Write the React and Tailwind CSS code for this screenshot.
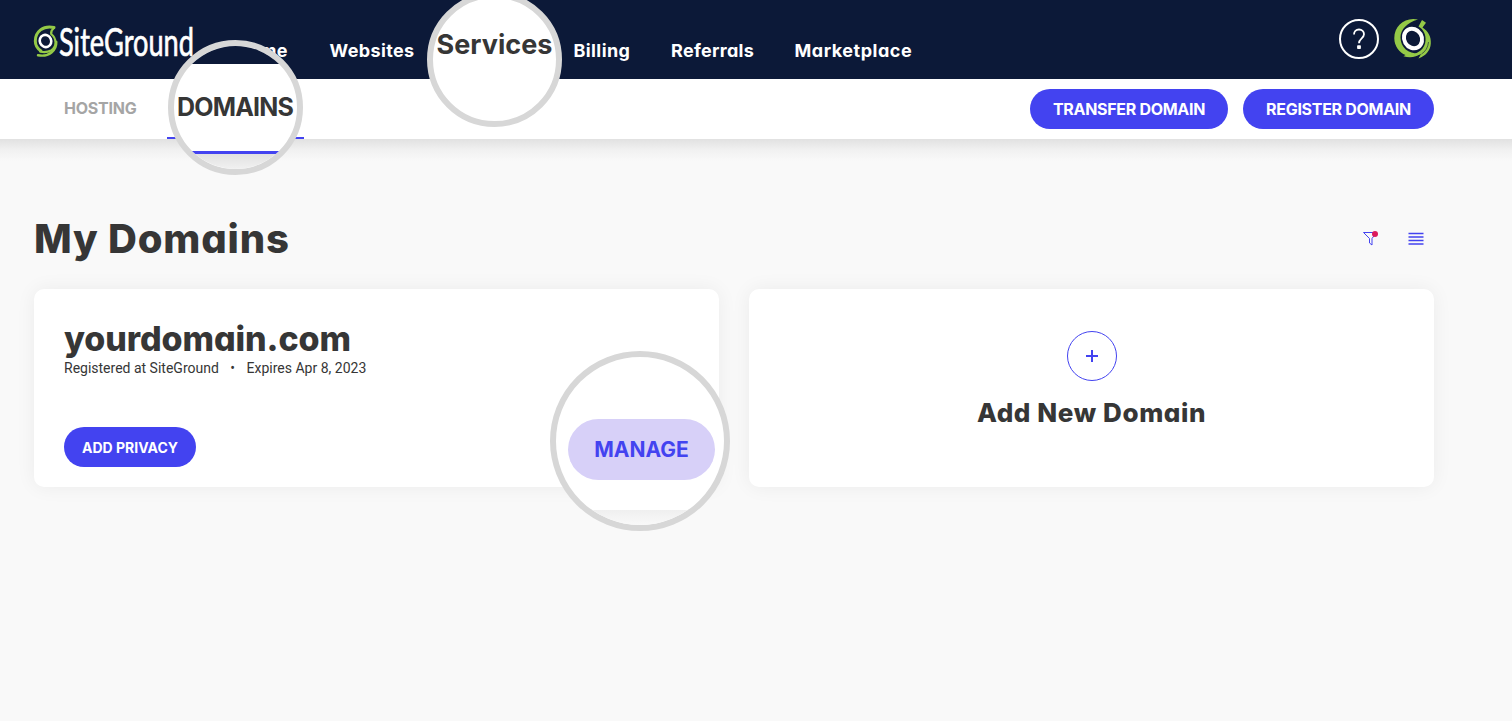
const NAV_ITEMS = [
  { label: 'Home', className: 'w-[54px] tracking-[0.3px]' },
  { label: 'Websites', className: 'w-[86px] tracking-[0.38px]' },
  // sits entirely behind the magnifier
  { label: 'Services', className: 'w-[77px] invisible' },
  { label: 'Billing', className: 'w-[57px] tracking-[0.4px]' },
  { label: 'Referrals', className: 'w-[83px] tracking-[0.3px]' },
  { label: 'Marketplace', className: 'w-[118px] tracking-[0.52px]' },
];

function Logo() {
  return (
    <svg className="block shrink-0" width="164" height="40" viewBox="0 0 164 40" role="img" aria-label="SiteGround">
      <g fill="none" strokeLinecap="round">
        <path d="M21 4.500C10 2 2.300 9 2.300 18c0 5 2.700 8 5.700 10" stroke="#94c947" strokeWidth="3" />
        <path d="M21 5c-2.500 2-3.300 3.500-2.800 6C24 15.500 24 24 18 27.500c-3.500 1.800-7 2-11 1" stroke="#94c947" strokeWidth="2.200" />
        <path d="M23.300 19c.3 8-7 15.500-18.300 13.200" stroke="#94c947" strokeWidth="2.400" />
        <ellipse cx="12.500" cy="18" rx="5.700" ry="6.200" transform="rotate(-24 12.500 18)" fill="#0c1938" stroke="#fff" strokeWidth="2.600" />
      </g>
      <text
        x="26"
        y="32.800"
        fontSize="38"
        fill="#fff"
        stroke="#fff"
        strokeWidth=".7"
        textLength="135"
        lengthAdjust="spacingAndGlyphs"
        className="font-[Lato,sans-serif]"
      >
        SiteGround
      </text>
    </svg>
  );
}

function Avatar() {
  return (
    <svg className="block" width="40" height="42" viewBox="0 0 40 42" aria-hidden="true">
      <path d="M24 1.500C11-1.500 0 8 .3 20.500c.2 8 5 14 11.200 16.500l-2 1.300c7 2.200 13 .7 17-2.800C16 36.500 6.500 30.500 6.500 19.500 6.500 11.500 13 4.500 24 1.500Z" fill="#94c947" />
      <path d="M28 2l4 2.800-3.500 4.700c5.500 3.500 8.800 9 8.300 16-.4 6.500-4.300 12-12.300 15l2.500-4.500c-4 2-10 2.800-14 1.800C25 36 31 30.500 31.500 22.500 32 16.500 29.500 11.500 24.500 8.500Z" fill="#94c947" />
      <path d="M34.500 24c-.5 5.500-3 9.500-7 12" fill="none" stroke="#0c1938" strokeWidth=".6" />
      <ellipse cx="19" cy="20.500" rx="8.800" ry="10" transform="rotate(-30 19 20.500)" fill="#0c1938" stroke="#fff" strokeWidth="4" />
    </svg>
  );
}

function PillButton({ children, className }) {
  return (
    <button className={`flex h-10 items-center justify-center rounded-full bg-[#4343f0] font-bold whitespace-nowrap text-white ${className}`}>
      {children}
    </button>
  );
}

// Round magnifier laid over the page
function Lens({ children, className }) {
  return (
    <div className={`absolute flex flex-col overflow-hidden rounded-full border-6 border-[#d7d7d7] bg-white ${className}`}>
      {children}
    </div>
  );
}

export default function App() {
  return (
    <div className="relative flex h-[721px] w-full flex-col overflow-hidden bg-[#f9f9f9] font-[Inter,'Open_Sans',sans-serif] text-[#363636] antialiased [font-feature-settings:'cv11']">
      <header className="flex h-[79px] shrink-0 items-start bg-[#0c1938] pr-[78px] pl-[33px]">
        <div className="pt-[23px]">
          <Logo />
        </div>
        <nav className="ml-[38px] flex gap-[40.500px] pt-[37px] text-[18px] leading-[27px] font-bold text-white">
          {NAV_ITEMS.map(item => (
            <a key={item.label} className={`whitespace-nowrap ${item.className}`}>{item.label}</a>
          ))}
        </nav>
        <div className="ml-auto flex gap-[15px] pt-[18px]">
          <div className="mt-px flex size-10 items-center justify-center rounded-full border-2 border-white">
            <svg width="14" height="22" viewBox="0 0 14 22" aria-label="Help">
              <path d="M2 6.500C2 3.500 4 1.500 7 1.500s5 2 5 4.700c0 4-5 4.300-5 9" fill="none" stroke="#fff" strokeWidth="1.800" />
              <rect x="5.100" y="17.200" width="3.800" height="3.800" rx=".8" fill="#fff" />
            </svg>
          </div>
          <Avatar />
        </div>
      </header>

      <div className="flex h-[60px] shrink-0 items-center bg-white pr-[78px] pl-[34px]">
        <div className="flex h-full text-[16px] font-bold">
          <a className="flex w-[133px] items-center pl-[30px] text-[#a5a5a5]">
            <span className="-mt-0.5 tracking-[-0.25px]">HOSTING</span>
          </a>
          <a className="w-[137px] border-b-2 border-[#4343f0]" aria-label="Domains" />
        </div>
        <div className="ml-auto flex gap-[15px] text-[16px]">
          <PillButton className="w-[198px] tracking-[-0.3px]">TRANSFER DOMAIN</PillButton>
          <PillButton className="w-[191px] tracking-[-0.3px]">REGISTER DOMAIN</PillButton>
        </div>
      </div>
      <div className="h-[22px] shrink-0 bg-linear-to-b from-[#e1e1e1] via-[#f1f1f1] to-[#f9f9f9]" />

      <main className="flex flex-col pr-[78px] pl-[34px]">
        <div className="mt-[48px] flex h-[60px] items-center justify-between">
          <h1 className="text-[40px] leading-[60px] font-extrabold tracking-[0.8px]">My Domains</h1>
          <div className="flex items-center gap-[28px] pr-[10px]">
            <svg className="mr-px -mt-0.5" width="17" height="17" viewBox="0 0 17 17" fill="none" aria-label="Filter">
              <path d="M1.500 2.500h13L10 8.500v6.500l-2.500-2V8.500Z" stroke="#4343f0" />
              <circle cx="13" cy="4" r="3" fill="#dc1b5c" />
            </svg>
            <svg className="-mt-px" width="16" height="14" viewBox="0 0 16 14" fill="none" aria-label="List view">
              <path d="M.5 1.500h15M.5 5h15M.5 8.500h15M.5 12h15" stroke="#4343f0" strokeWidth="1.300" />
            </svg>
          </div>
        </div>

        <div className="mt-[20px] grid grid-cols-2 gap-[30px]">
          <section className="flex h-[198px] flex-col items-start rounded-[10px] bg-white px-[30px] pt-[26px] shadow-[0_0_20px_rgba(0,0,0,0.06)]">
            <h2 className="text-[34px] leading-[48px] font-extrabold tracking-[-0.1px]">yourdomain.com</h2>
            <div className="-mt-[2px] flex gap-[11.500px] font-[Roboto,sans-serif] text-[14px] leading-[14px]">
              <span>Registered at SiteGround</span>
              <span>•</span>
              <span>Expires Apr 8, 2023</span>
            </div>
            <PillButton className="mt-[52px] w-[132px] text-[14px]">ADD PRIVACY</PillButton>
          </section>

          <section className="flex h-[198px] flex-col items-center rounded-[10px] bg-white pt-[42px] shadow-[0_0_20px_rgba(0,0,0,0.06)]">
            <div className="flex size-[50px] items-center justify-center rounded-full border border-[#4343f0]">
              <svg width="12" height="12" viewBox="0 0 12 12" aria-hidden="true">
                <path d="M6 0v12M0 6h12" stroke="#4343f0" strokeWidth="2" />
              </svg>
            </div>
            <h2 className="mt-[12px] text-[26px] leading-[39px] font-extrabold tracking-[0.6px]">Add New Domain</h2>
          </section>
        </div>
      </main>

      <Lens className="top-[40px] left-[168px] size-[135px]">
        <div className="h-[18px] shrink-0 bg-[#0c1938]" />
        <div className="flex h-[90px] shrink-0 items-center justify-center border-b-[3px] border-[#4343f0] text-[25px] font-bold">
          <span className="-ml-px tracking-[-0.8px]">DOMAINS</span>
        </div>
        <div className="flex-1 bg-linear-to-b from-[#e1e1e1] to-[#f1f1f1]" />
      </Lens>

      <Lens className="-top-[8px] left-[427px] size-[135px]">
        <span className="mt-[27px] text-center text-[27px] leading-[40px] font-bold">Services</span>
      </Lens>

      <Lens className="top-[351px] left-[550px] size-[180px]">
        <div className="flex h-[153px] shrink-0 flex-col pt-[62px] pl-[12px]">
          <div className="flex h-[61px] w-[147px] items-center justify-center rounded-full bg-[#d7d0f8] text-[21px] font-bold text-[#4343f0]">
            MANAGE
          </div>
        </div>
        <div className="flex-1 bg-linear-to-b from-[#efefef] to-[#f9f9f9]" />
      </Lens>
    </div>
  );
}
